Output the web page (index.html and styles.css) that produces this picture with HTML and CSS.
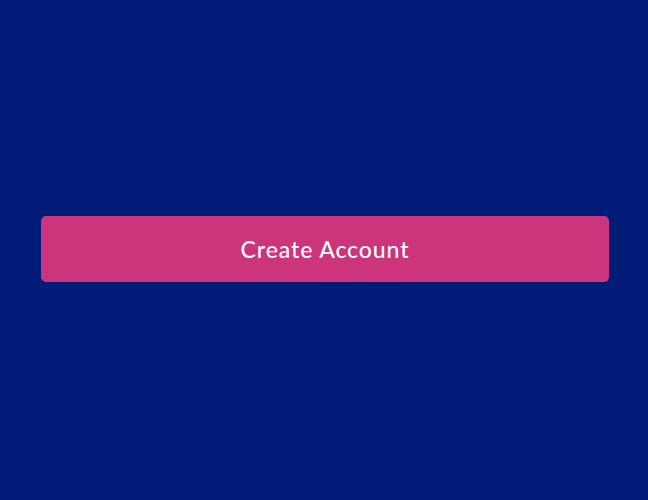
FILE: index.html
```html
<!DOCTYPE html>
<html>
<head>
<meta charset="utf-8">
<link rel="stylesheet" href="styles.css">
</head>
<body>
<div class="page">
  <button class="btn">Create Account</button>
</div>
</body>
</html>
```
FILE: styles.css
```css
html, body {
  margin: 0;
  padding: 0;
  background: #001c78;
}
.page {
  height: 500px;
  display: flex;
  flex-direction: column;
  justify-content: center;
  padding: 0 39px 0 41px;
  box-sizing: border-box;
}
.btn {
  display: block;
  width: 100%;
  height: 66px;
  margin-top: -3px;
  padding-top: 2px;
  border: none;
  border-radius: 5px;
  background: #cc347c;
  color: #ffffff;
  font-family: "Lato", "Open Sans", sans-serif;
  font-size: 23px;
  font-weight: 500;
  letter-spacing: 0.9px;
}
```
